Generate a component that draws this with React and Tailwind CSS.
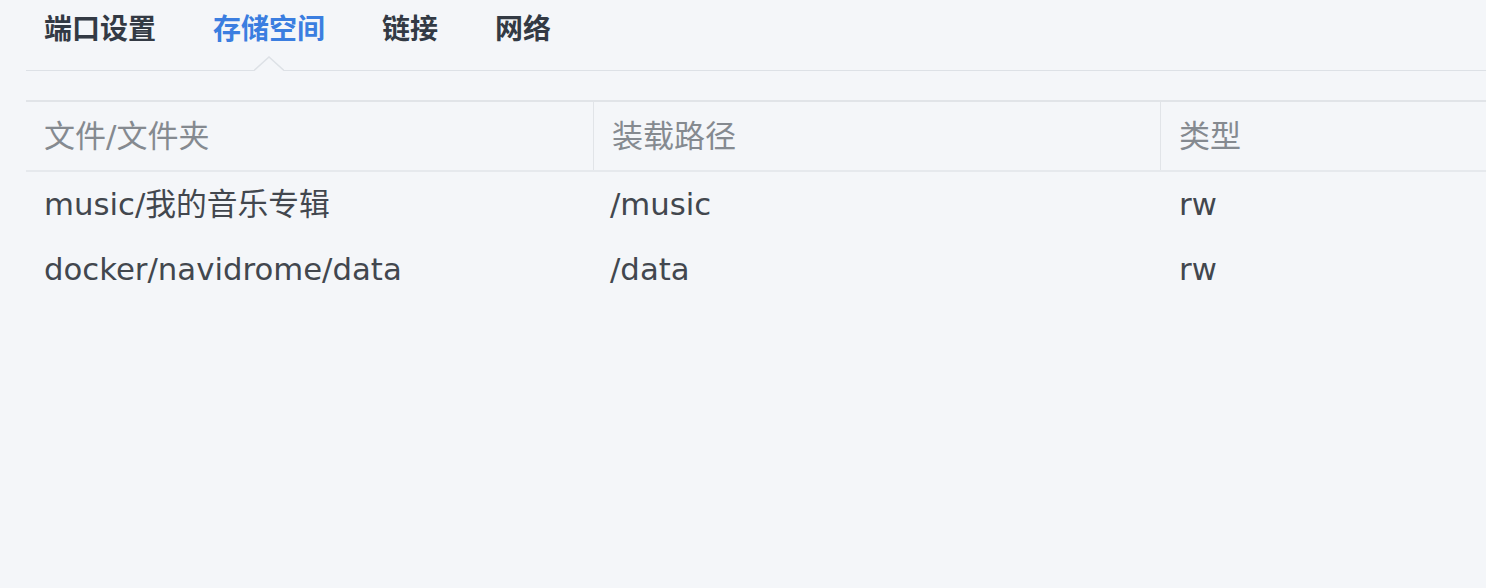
import React from 'react';

const tabs = ['端口设置', '存储空间', '链接', '网络'];

const rows = [
  { file: 'music/我的音乐专辑', mount: '/music', type: 'rw' },
  { file: 'docker/navidrome/data', mount: '/data', type: 'rw' },
];

export default function App() {
  const active = 1;
  return (
    <div
      className="w-[1486px] h-[588px] overflow-hidden bg-[#f4f6f9] pl-[26px]"
      style={{ fontFamily: '"DejaVu Sans", "Noto Sans CJK SC", sans-serif' }}
    >
      {/* Tabs */}
      <div
        className="relative flex h-[71px] border-b border-[#dde1e6] pl-[18px] gap-[57px]"
        style={{ fontFamily: '"Noto Sans", "Noto Sans CJK SC", sans-serif' }}
      >
        {tabs.map((t, i) => (
          <div
            key={t}
            className={`relative h-full pt-[9px] text-[28px] font-bold leading-[38px] ${i === active ? 'text-[#3b7ee0]' : 'text-[#333a44]'}`}
          >
            {t}
            {i === active && (
              <svg
                className="absolute left-1/2 -translate-x-1/2 bottom-[-1px]"
                width="30"
                height="15"
                viewBox="0 0 30 15"
              >
                <polygon points="0,15 15,1 30,15" fill="#f4f6f9" />
                <polyline points="0,14.5 15,1 30,14.5" fill="none" stroke="#dde1e6" strokeWidth="1.5" />
              </svg>
            )}
          </div>
        ))}
      </div>

      {/* Table */}
      <div className="mt-[29px] border-t-2 border-[#e1e4e8]">
        <div className="grid grid-cols-[567px_567px_1fr] h-[70px] border-b-2 border-[#e6e9ed] text-[31px] text-[#858a90]">
          <div className="flex items-center pl-[18px]">文件/文件夹</div>
          <div className="flex items-center pl-[18px] border-l border-[#e1e4e8]">装载路径</div>
          <div className="flex items-center pl-[18px] border-l border-[#e1e4e8]">类型</div>
        </div>
        {rows.map((r) => (
          <div key={r.file} className="grid grid-cols-[567px_567px_1fr] h-[65px] text-[30.75px] text-[#42474e]">
            <div className="flex items-center pl-[18px]">{r.file}</div>
            <div className="flex items-center pl-[17px]">{r.mount}</div>
            <div className="flex items-center pl-[19px]">{r.type}</div>
          </div>
        ))}
      </div>
    </div>
  );
}
